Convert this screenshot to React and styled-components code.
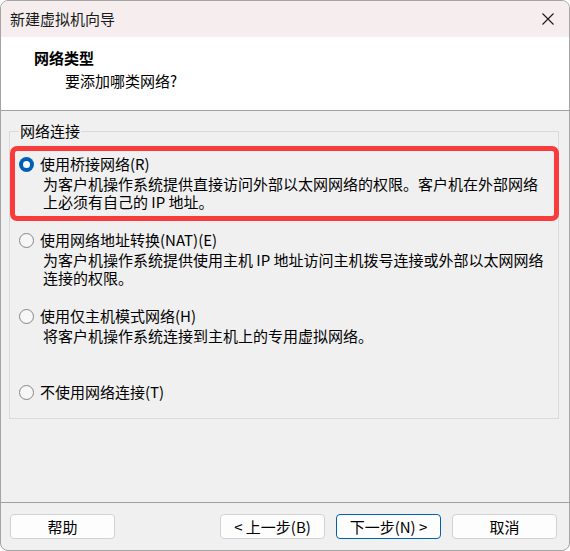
import React from 'react';
import styled, { createGlobalStyle, css } from 'styled-components';

const FONT = `"Noto Sans CJK SC", "Noto Sans", sans-serif`;

const GlobalStyle = createGlobalStyle`
  html, body { margin: 0; padding: 0; background: #ffffff; }
  *, *::before, *::after { box-sizing: border-box; }
  body { font-family: ${FONT}; }
`;

const Window = styled.div`
  width: 570px;
  height: 551px;
  border: 1px solid #a4a4a4;
  border-radius: 8px;
  overflow: hidden;
  display: flex;
  flex-direction: column;
  background: #f0f0f0;
  font-family: ${FONT};
  font-size: 15px;
  color: #000;
`;

const TitleBar = styled.div`
  flex: none;
  height: 36px;
  display: flex;
  align-items: center;
  justify-content: space-between;
  padding: 0 15px 0 9px;
  background: #f6eeee;
`;

const Title = styled.span`
  font-size: 15px;
  line-height: 20px;
  color: #1a1a1a;
`;

const CloseButton = styled.button`
  width: 12px;
  height: 12px;
  padding: 0;
  border: none;
  background: transparent;
  display: flex;
  align-items: center;
  justify-content: center;
`;

const Header = styled.div`
  flex: none;
  height: 74px;
  background: #ffffff;
  border-bottom: 1px solid #a0a0a0;
  padding: 10px 0 0 33px;
`;

const HeaderTitle = styled.div`
  font-weight: 700;
  font-size: 15px;
  line-height: 21px;
`;

const HeaderSubtitle = styled.div`
  margin: 2px 0 0 31px;
  font-size: 15px;
  line-height: 21px;
`;

const Body = styled.div`
  flex: 1;
  padding: 10px 10px 0 8px;
`;

const Group = styled.fieldset`
  margin: 0;
  height: 298px;
  border: 1px solid #dadada;
  padding: 13px 0 0 9px;
  min-width: 0;
`;

const Legend = styled.legend`
  padding: 0 1px;
  font-size: 15px;
  line-height: 20px;
  color: #000;
`;

const Option = styled.div`
  position: relative;
  height: 76px;
  ${(p) =>
    p.$highlighted &&
    css`
      &::after {
        content: '';
        position: absolute;
        top: -8px;
        left: -9px;
        right: -1px;
        height: 75px;
        border: 5px solid #f83b3b;
        border-radius: 7px;
        pointer-events: none;
      }
    `}
`;

const OptionRow = styled.label`
  display: flex;
  align-items: center;
  gap: 6px;
  line-height: 20px;
  height: 20px;
`;

const Description = styled.div`
  margin: 1px 0 0 24px;
  line-height: 18px;
`;

const DescLine = styled.div`
  white-space: nowrap;
`;

const Footer = styled.div`
  flex: none;
  height: 48px;
  border-top: 1px solid #a0a0a0;
  display: flex;
  align-items: flex-start;
  gap: 11px;
  padding: 11px 12px 0 9px;
`;

const Spacer = styled.div`
  flex: 1;
`;

const Button = styled.button`
  width: 105px;
  height: 25px;
  padding: 0;
  border: 1px solid ${(p) => (p.$primary ? '#005fb8' : '#d2d2d2')};
  border-radius: 4px;
  background: #fdfdfd;
  font-family: ${FONT};
  font-size: 15px;
  line-height: 20px;
  color: #000;
  display: flex;
  align-items: center;
  justify-content: center;
`;

function Radio({ checked }) {
  return (
    <svg width="15" height="15" viewBox="0 0 15 15" style={{ flex: 'none' }}>
      {checked ? (
        <>
          <circle cx="7.5" cy="7.5" r="7.5" fill="#005fb8" />
          <circle cx="7.5" cy="7.5" r="3.5" fill="#ffffff" />
        </>
      ) : (
        <circle cx="7.5" cy="7.5" r="7" fill="#f7f7f7" stroke="#858585" strokeWidth="1" />
      )}
    </svg>
  );
}

const options = [
  {
    label: '使用桥接网络(R)',
    desc: ['为客户机操作系统提供直接访问外部以太网网络的权限。客户机在外部网络', '上必须有自己的 IP 地址。'],
    checked: true,
    highlighted: true,
  },
  {
    label: '使用网络地址转换(NAT)(E)',
    desc: ['为客户机操作系统提供使用主机 IP 地址访问主机拨号连接或外部以太网网络', '连接的权限。'],
  },
  {
    label: '使用仅主机模式网络(H)',
    desc: ['将客户机操作系统连接到主机上的专用虚拟网络。'],
  },
  {
    label: '不使用网络连接(T)',
    desc: [],
  },
];

export default function App() {
  return (
    <>
      <GlobalStyle />
      <Window>
        <TitleBar>
          <Title>新建虚拟机向导</Title>
          <CloseButton aria-label="关闭">
            <svg width="12" height="12" viewBox="0 0 12 12">
              <path d="M0.5 0.5 L11.5 11.5 M11.5 0.5 L0.5 11.5" stroke="#1a1a1a" strokeWidth="1.1" />
            </svg>
          </CloseButton>
        </TitleBar>
        <Header>
          <HeaderTitle>网络类型</HeaderTitle>
          <HeaderSubtitle>要添加哪类网络?</HeaderSubtitle>
        </Header>
        <Body>
          <Group>
            <Legend>网络连接</Legend>
            {options.map((o) => (
              <Option key={o.label} $highlighted={o.highlighted}>
                <OptionRow>
                  <Radio checked={o.checked} />
                  <span>{o.label}</span>
                </OptionRow>
                {o.desc.length > 0 && (
                  <Description>
                    {o.desc.map((line) => (
                      <DescLine key={line}>{line}</DescLine>
                    ))}
                  </Description>
                )}
              </Option>
            ))}
          </Group>
        </Body>
        <Footer>
          <Button>帮助</Button>
          <Spacer />
          <Button>&lt; 上一步(B)</Button>
          <Button $primary>下一步(N) &gt;</Button>
          <Button>取消</Button>
        </Footer>
      </Window>
    </>
  );
}
